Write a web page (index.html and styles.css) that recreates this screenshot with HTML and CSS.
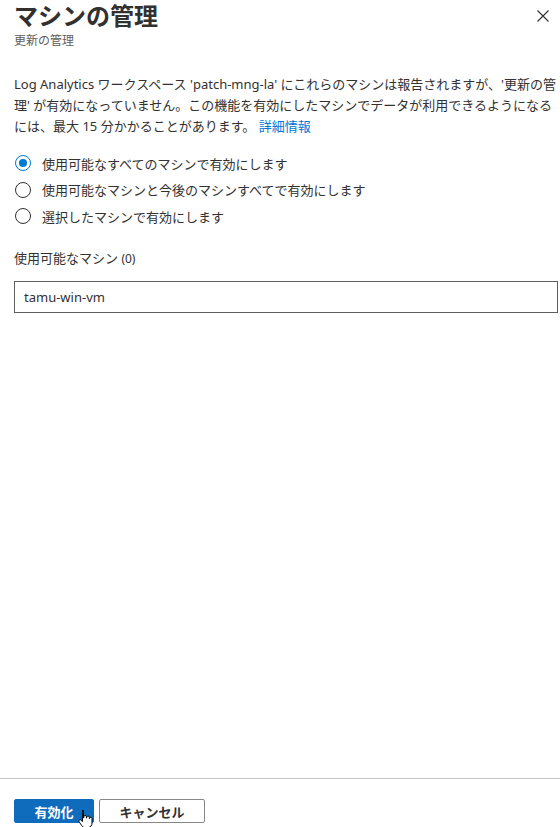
FILE: index.html
```html
<!DOCTYPE html>
<html lang="ja">
<head>
  <meta charset="UTF-8" />
  <meta name="viewport" content="width=device-width, initial-scale=1.0" />
  <title>マシンの管理</title>
  <link rel="stylesheet" href="styles.css">
</head>
<body>
  <div class="panel">
    <div class="panel-body">
      <div class="header">
        <div>
          <h1 class="title">マシンの管理</h1>
          <div class="subtitle">更新の管理</div>
        </div>
        <button class="close" aria-label="閉じる">
          <svg width="12" height="12" viewBox="0 0 12 12"><path d="M0.5 0.5 L11.5 11.5 M11.5 0.5 L0.5 11.5" stroke="#323130" stroke-width="1.1" fill="none"/></svg>
        </button>
      </div>

      <p class="info">Log Analytics ワークスペース 'patch-mng-la' にこれらのマシンは報告されますが、'更新の管理' が有効になっていません。この機能を有効にしたマシンでデータが利用できるようになるには、最大 15 分かかることがあります。 <a href="#">詳細情報</a></p>

      <div class="radios">
        <label class="radio checked"><span class="dot"></span>使用可能なすべてのマシンで有効にします</label>
        <label class="radio"><span class="dot"></span>使用可能なマシンと今後のマシンすべてで有効にします</label>
        <label class="radio"><span class="dot"></span>選択したマシンで有効にします</label>
      </div>

      <div class="field-label">使用可能なマシン <span class="count">(0)</span></div>
      <div class="list-box">tamu-win-vm</div>
    </div>

    <div class="footer">
      <button class="btn primary">有効化</button>
      <button class="btn">キャンセル</button>
      <svg class="cursor" width="16" height="20" viewBox="0 0 16 20">
        <path d="M5 1.5 c0.8 0 1.4 0.6 1.4 1.4 v6 h0.4 v-1.2 c0-0.8 0.6-1.3 1.3-1.3 s1.3 0.5 1.3 1.3 v1.4 h0.3 v-0.8 c0-0.8 0.6-1.3 1.3-1.3 s1.3 0.5 1.3 1.3 v1.2 h0.3 c0-0.8 0.6-1.2 1.2-1.2 s1.2 0.5 1.2 1.200 v4.5 c0 2.5-1.5 4.5-4 4.5 h-3 c-1.5 0-2.4-0.7-3.2-1.8 l-2.6-3.8 c-0.5-0.7-0.3-1.5 0.3-1.9 s1.4-0.3 1.9 0.3 l1 1.3 v-9.3 c0-0.8 0.6-1.4 1.4-1.4 z" fill="#fff" stroke="#000" stroke-width="1"/>
      </svg>
    </div>
  </div>
</body>
</html>
```

FILE: styles.css
```css
body {
  margin: 0;
  font-family: "Noto Sans", "Noto Sans CJK JP", sans-serif;
  color: #323130;
  background: #fff;
}
.panel {
  height: 827px;
  display: flex;
  flex-direction: column;
}
.panel-body {
  flex: 1;
  padding: 0 2px 0 14px;
}
.header {
  display: flex;
  justify-content: space-between;
  align-items: flex-start;
}
.title {
  margin: 0;
  padding-top: 1px;
  font-size: 24px;
  line-height: 30px;
  font-weight: 700;
  color: #323130;
}
.subtitle {
  margin-top: 2px;
  font-size: 12px;
  line-height: 16px;
  color: #605e5c;
}
.close {
  background: none;
  border: none;
  padding: 0;
  margin: 10px 9px 0 0;
  width: 12px;
  height: 12px;
  cursor: pointer;
}
.close svg {
  display: block;
}
.info {
  margin: 25px 0 0;
  font-size: 13px;
  line-height: 21px;
}
.info a {
  color: #0078d4;
  text-decoration: none;
}
.radios {
  margin-top: 13px;
}
.radio {
  display: flex;
  align-items: center;
  height: 26.5px;
  font-size: 13px;
}
.dot {
  width: 16px;
  height: 16px;
  box-sizing: border-box;
  border: 1px solid #323130;
  border-radius: 50%;
  margin: 0 11px 0 1px;
  position: relative;
}
.radio.checked .dot {
  border-color: #0078d4;
}
.radio.checked .dot::after {
  content: "";
  position: absolute;
  left: 3px;
  top: 3px;
  width: 8px;
  height: 8px;
  border-radius: 50%;
  background: #0078d4;
}
.field-label {
  margin-top: 19px;
  font-size: 13px;
  line-height: 18px;
}
.count {
  font-size: 12px;
}
.list-box {
  margin-top: 13px;
  height: 32px;
  box-sizing: border-box;
  border: 1px solid #605e5c;
  padding: 0 9px;
  font-size: 13px;
  line-height: 30px;
}
.footer {
  position: relative;
  border-top: 1px solid #c8c6c4;
  padding: 20px 14px 4px;
  display: flex;
  gap: 5px;
}
.btn {
  height: 24px;
  padding: 0;
  width: 106px;
  border: 1px solid #8a8886;
  border-radius: 2px;
  background: #fff;
  color: #323130;
  font-family: "Noto Sans", "Noto Sans CJK JP", sans-serif;
  font-size: 13px;
  font-weight: 700;
  cursor: pointer;
}
.btn.primary {
  width: 80px;
  background: #0f6cbd;
  border-color: #0f6cbd;
  color: #fff;
}
.cursor {
  position: absolute;
  left: 77px;
  top: 30px;
}
```
